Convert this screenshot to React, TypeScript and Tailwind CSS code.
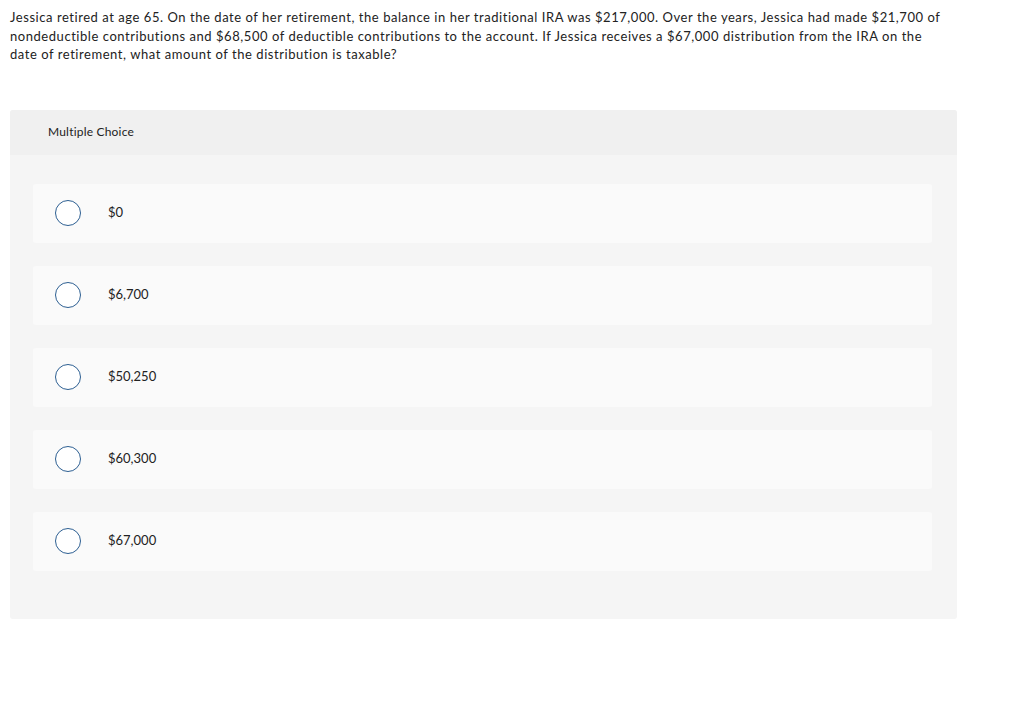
import React from 'react';

const choices = ['$0', '$6,700', '$50,250', '$60,300', '$67,000'];

export default function App() {
  return (
    <div className="min-h-[720px] w-[1018px] bg-white text-[#222] [font-family:Lato,'Open_Sans',sans-serif]">
      <p className="pl-[10px] pr-[72px] pt-[8px] text-[13px] leading-[18.5px] tracking-[0.55px]">
        Jessica retired at age 65. On the date of her retirement, the balance in her traditional IRA was $217,000. Over the years, Jessica had made $21,700 of nondeductible contributions and $68,500 of deductible contributions to the account. If Jessica receives a $67,000 distribution from the IRA on the date of retirement, what amount of the distribution is taxable?
      </p>

      <div className="ml-[10px] mt-[46px] w-[947px] overflow-hidden rounded-[3px] bg-[#f5f5f5]">
        <div className="flex h-[45px] items-center bg-[#f0f0f0] pl-[38px] text-[12px] tracking-[0.2px]">Multiple Choice</div>
        <div className="flex flex-col gap-[23px] pb-[48px] pl-[23px] pr-[25px] pt-[29px]">
          {choices.map((c) => (
            <div key={c} className="flex h-[59px] items-center rounded-[3px] bg-[#fafafa] pl-[22px]">
              <span className="h-[26px] w-[26px] rounded-full border-[1.5px] border-[#2d5f92] bg-white" />
              <span className="ml-[27px] text-[13px]">{c}</span>
            </div>
          ))}
        </div>
      </div>
    </div>
  );
}
